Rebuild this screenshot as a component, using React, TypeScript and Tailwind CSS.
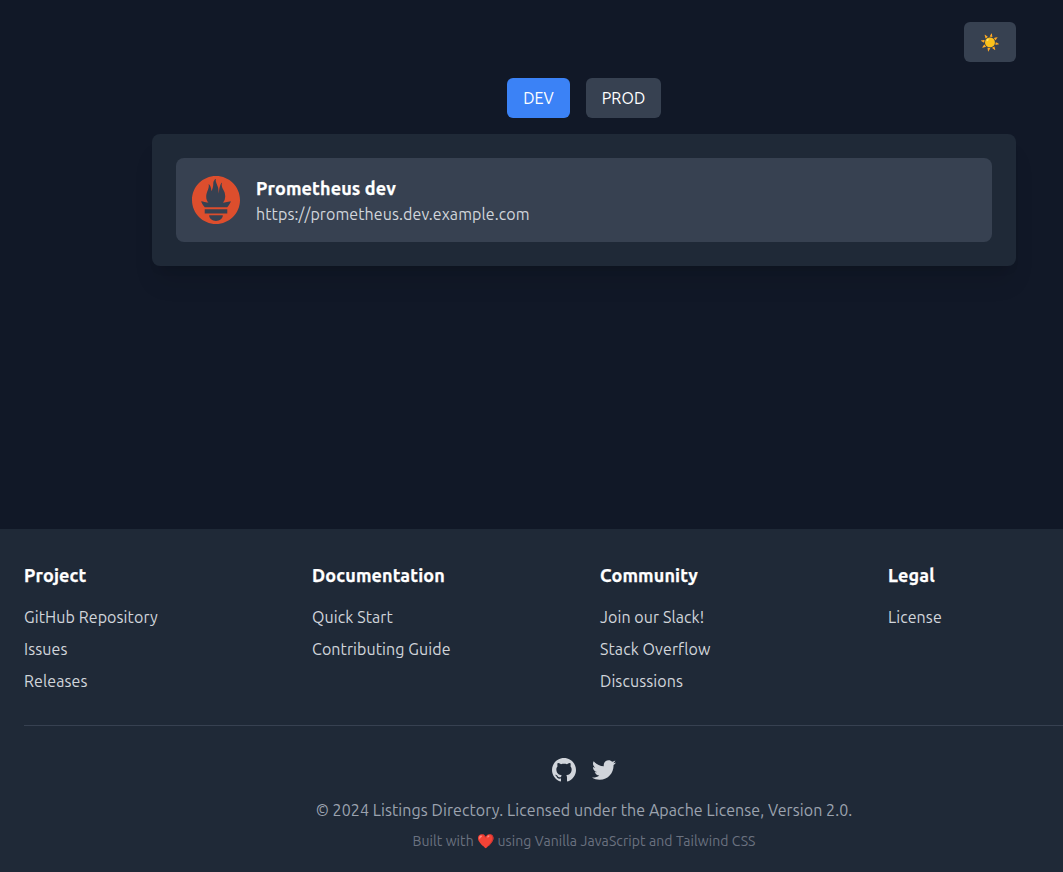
import { SiPrometheus } from "react-icons/si";

const columns = [
  { title: "Project", links: ["GitHub Repository", "Issues", "Releases"] },
  { title: "Documentation", links: ["Quick Start", "Contributing Guide"] },
  { title: "Community", links: ["Join our Slack!", "Stack Overflow", "Discussions"] },
  { title: "Legal", links: ["License"] },
];

function GitHubIcon() {
  return (
    <svg className="h-6 w-6" fill="currentColor" viewBox="0 0 24 24" aria-hidden="true">
      <path d="M12 0c-6.626 0-12 5.373-12 12 0 5.302 3.438 9.8 8.207 11.387.599.111.793-.261.793-.577v-2.234c-3.338.726-4.033-1.416-4.033-1.416-.546-1.387-1.333-1.756-1.333-1.756-1.089-.745.083-.729.083-.729 1.205.084 1.839 1.237 1.839 1.237 1.07 1.834 2.807 1.304 3.492.997.107-.775.418-1.305.762-1.604-2.665-.305-5.467-1.334-5.467-5.931 0-1.311.469-2.381 1.236-3.221-.124-.303-.535-1.524.117-3.176 0 0 1.008-.322 3.301 1.23.957-.266 1.983-.399 3.003-.404 1.02.005 2.047.138 3.006.404 2.291-1.552 3.297-1.23 3.297-1.23.653 1.653.242 2.874.118 3.176.77.84 1.235 1.911 1.235 3.221 0 4.609-2.807 5.624-5.479 5.921.43.372.823 1.102.823 2.222v3.293c0 .319.192.694.801.576 4.765-1.589 8.199-6.086 8.199-11.386 0-6.627-5.373-12-12-12z" />
    </svg>
  );
}

function TwitterIcon() {
  return (
    <svg className="h-6 w-6" fill="currentColor" viewBox="0 0 24 24" aria-hidden="true">
      <path d="M24 4.557c-.883.392-1.832.656-2.828.775 1.017-.609 1.798-1.574 2.165-2.724-.951.564-2.005.974-3.127 1.195-.897-.957-2.178-1.555-3.594-1.555-3.179 0-5.515 2.966-4.797 6.045-4.091-.205-7.719-2.165-10.148-5.144-1.29 2.213-.669 5.108 1.523 6.574-.806-.026-1.566-.247-2.229-.616-.054 2.281 1.581 4.415 3.949 4.89-.693.188-1.452.232-2.224.084.626 1.956 2.444 3.379 4.6 3.419-2.07 1.623-4.678 2.348-7.29 2.04 2.179 1.397 4.768 2.212 7.548 2.212 9.142 0 14.307-7.721 13.995-14.646.962-.695 1.797-1.562 2.457-2.549z" />
    </svg>
  );
}

export default function App() {
  return (
    <div className="h-[872px] w-full overflow-hidden bg-[#111827] font-['Ubuntu','Noto_Sans',sans-serif] text-base tracking-[0.09px] text-white">
      <div className="flex h-full w-[1168px] flex-col">
        <main className="mx-auto flex h-[529px] w-[896px] shrink-0 flex-col px-4 pt-[22px]">
          <div className="flex justify-end">
            <button className="h-10 w-[52px] rounded-md bg-[#374151] tracking-normal">☀️</button>
          </div>
          <div className="mt-4 flex justify-center gap-4">
            <button className="h-10 w-[63px] rounded-md bg-[#3b82f6]">DEV</button>
            <button className="h-10 w-[75px] rounded-md bg-[#374151]">PROD</button>
          </div>
          <section className="mt-4 rounded-lg bg-[#1f2937] p-6 shadow-xl">
            <a className="flex h-[84px] items-center rounded-lg bg-[#374151] px-4">
              <SiPrometheus className="mr-4 h-12 w-12 text-[#dd4e2d]" />
              <div className="flex flex-col">
                <h3 className="text-lg leading-7 font-bold tracking-[0.14px] [-webkit-text-stroke:0.25px_white]">Prometheus dev</h3>
                <p className="leading-6 text-[#d1d5db]">https://prometheus.dev.example.com</p>
              </div>
            </a>
          </section>
        </main>
        <footer className="grow bg-[#1f2937] px-6 pt-8">
          <div className="grid grid-cols-4 gap-8">
            {columns.map((column) => (
              <div key={column.title}>
                <h3 className="mb-4 text-lg leading-7 font-bold tracking-[0.14px] [-webkit-text-stroke:0.25px_white]">{column.title}</h3>
                <ul className="space-y-2 text-[#d1d5db]">
                  {column.links.map((link) => (
                    <li key={link}>{link}</li>
                  ))}
                </ul>
              </div>
            ))}
          </div>
          <div className="mt-8 border-t border-[#374151] pt-8 text-center">
            <div className="mb-4 flex justify-center gap-4 text-[#d1d5db]">
              <GitHubIcon />
              <TwitterIcon />
            </div>
            <p className="tracking-[0.08px] text-[#9ca3af]">© 2024 Listings Directory. Licensed under the Apache License, Version 2.0.</p>
            <p className="mt-[9px] text-sm text-[#6b7280]">Built with ❤️ using Vanilla JavaScript and Tailwind CSS</p>
          </div>
        </footer>
      </div>
    </div>
  );
}
